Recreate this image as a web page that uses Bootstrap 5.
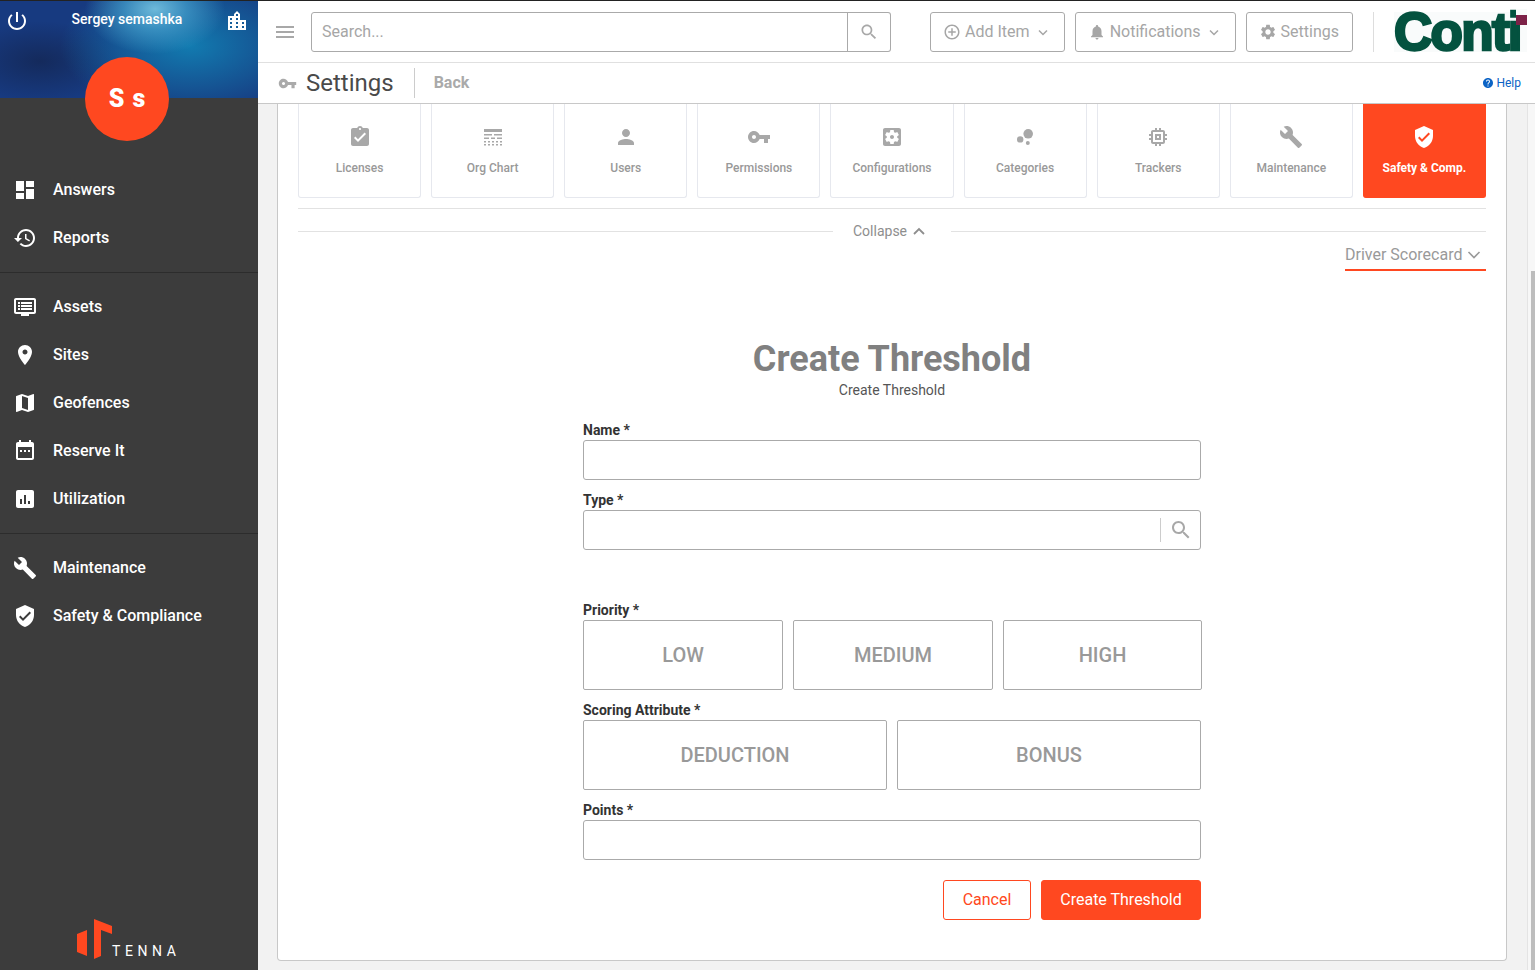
<!DOCTYPE html>
<html lang="en">
<head>
<meta charset="utf-8">
<title>Create Threshold</title>
<link href="https://cdn.jsdelivr.net/npm/bootstrap@5.3.3/dist/css/bootstrap.min.css" rel="stylesheet">
<style>
  html, body { height: 970px; overflow: hidden; }
  body { font-family: Roboto, "Liberation Sans", sans-serif; font-size: 14px; background: #f2f2f2; border-top: 1px solid #222; }
  .ico { width: 24px; height: 24px; fill: currentColor; flex: none; }
  .gap-10 { gap: 10px; }

  /* sidebar */
  .side { width: 258px; height: 969px; background: #3c3c3c; color: #fff; flex: none; }
  .hero { height: 97px; padding: 8px 9px 0 5px; background:
      radial-gradient(ellipse 70px 45px at 155px 8px, #6db9da 0%, rgba(70,160,205,.7) 45%, rgba(20,110,170,0) 100%),
      radial-gradient(ellipse 130px 70px at 190px 45px, #127bb0 0%, rgba(16,100,160,0) 100%),
      radial-gradient(ellipse 80px 40px at 40px 60px, #142a5c 0%, rgba(15,35,80,0) 100%),
      #173a80; }
  .hero-name { font-size: 14px; font-weight: 500; line-height: 18px; margin-top: 1px; }
  .avatar { width: 84px; height: 84px; left: 85px; top: 56px; padding-left: 1px; background: #ff4820; font-size: 25px; font-weight: 900; letter-spacing: 1px; }
  .side-nav { padding-top: 68px; }
  .side-item { height: 48px; padding-left: 13px; font-size: 16px; font-weight: 500; color: #fff; gap: 16px; }
  .side-rule { border-top: 1px solid #2c2c2c; margin: 10px 0; }
  .tenna { padding: 0 0 10px 76px; }
  .tenna-word { font-size: 14px; letter-spacing: 4.6px; line-height: 14px; margin-left: -1px; padding-bottom: 2px; }

  /* top bars */
  .topbar { height: 62px; background: #fff; border-bottom: 1px solid #e0e0e0; padding: 0 8px 0 15px; }
  .burger { color: #a8a8a8; }
  .search-box { width: 580px; height: 40px; margin-left: 14px; }
  .search-box .form-control { border-color: #aaa; border-radius: 3px 0 0 3px; font-size: 16px; padding-left: 10px; }
  .search-box .form-control::placeholder { color: #a6a6a6; }
  .search-btn { width: 44px; background: #fff; border: 1px solid #aaa; border-left-color: #888; border-radius: 0 3px 3px 0; color: #a8a8a8; }
  .search-btn .ico { width: 20px; height: 20px; }
  .top-btn { height: 40px; border: 1px solid #aaa; border-radius: 3px; background: #fff; color: #a6a6a6; font-size: 16px; padding: 0 13px 0 12px; gap: 4px; margin-left: 10px; }
  .top-btn .ico { width: 18px; height: 18px; }
  .top-chev { width: 16px; height: 16px; margin-left: 1px; fill: none; stroke: currentColor; stroke-width: 1.5; }
  .top-rule { width: 1px; height: 40px; background: #ddd; margin: 0 20px; }
  .conti { width: 133px; height: 40px; background: #f9fbfb; }
  .conti-word { font-family: "Liberation Sans", sans-serif; font-size: 53px; font-weight: 700; line-height: 40px; letter-spacing: -1.7px; color: #04523f; -webkit-text-stroke: 2.6px #04523f; }
  .conti-dot { width: 11px; height: 10px; background: #7d2248; right: 0; top: 3px; box-shadow: 0 -6px 0 #f9fbfb; }
  .subbar { height: 41px; background: #fff; border-bottom: 1px solid #c8c8c8; padding: 0 14px 0 20px; }
  .subbar .key { width: 19px; height: 19px; color: #aaa; }
  .sub-title { font-size: 24px; color: #4a4a4a; margin-left: 9px; line-height: 30px; }
  .sub-rule { width: 1px; height: 30px; background: #ccc; margin: 0 19px 0 20px; }
  .sub-back { font-size: 16px; font-weight: 700; color: #aaa; }
  .help { font-size: 12px; color: #0b63c5; gap: 2px; }
  .help .ico { width: 12px; height: 12px; }

  /* content */
  .stage { padding: 0 20px 0 19px; }
  .sheet { background: #fff; border: 1px solid #c8c8c8; border-top: 0; border-radius: 0 0 4px 4px; height: 857px; padding: 0 20px; }
  .tile { flex: 1 1 0; height: 94px; border: 1px solid #e6e8ee; border-top: 0; border-radius: 0 0 3px 3px; color: #a8a8a8; font-size: 12px; font-weight: 500; padding-top: 21px; }
  .tile .ico { margin-bottom: 10px; }
  .tile span { color: #999; line-height: 18px; }
  .tile-on { background: #ff4820; border-color: #ff4820; color: #fff; font-weight: 700; }
  .tile-on span { color: #fff; }
  .tile-rule { border-top: 1px solid #e2e2e2; margin-top: 10px; }
  .collapse-row { margin-top: 13px; height: 18px; color: #8e8e8e; }
  .collapse-line { flex: 1 1 0; border-top: 1px solid #e2e2e2; }
  .collapse-txt { width: 118px; padding-left: 20px; white-space: nowrap; gap: 5px; }
  .collapse-txt svg { width: 14px; height: 14px; fill: none; stroke: currentColor; stroke-width: 1.8; }
  .scorecard { width: 141px; margin-top: 1px; height: 30px; border-bottom: 2px solid #ff4820; font-size: 16px; color: #999; }
  .scorecard svg { width: 16px; height: 16px; margin-right: 4px; fill: none; stroke: currentColor; stroke-width: 1.6; }
  .form-title { font-size: 36px; font-weight: 700; color: #808080; line-height: 42px; margin-top: 67px; }
  .form-sub { color: #555; line-height: 20px; }
  .form-box { width: 618px; margin: 10px auto 0; }
  .fld-label { font-weight: 700; color: #333; line-height: 20px; margin-top: 10px; height: 20px; }
  .fld-label-far { margin-top: 50px; }
  .fld { height: 40px; border: 1px solid #aaa; border-radius: 3px; }
  .fld.form-control { border-color: #aaa; border-radius: 3px; }
  .fld-search { color: #a8a8a8; padding-right: 7px; }
  .fld-search i { width: 1px; height: 24px; background: #ccc; margin-right: 8px; }
  .pick { flex: 1 1 0; height: 70px; border: 1px solid #aaa; border-radius: 2px; background: #fff; color: #999; font-size: 20px; font-weight: 500; }
  .pick-wide { margin-right: -1px; }
  .pick-wide .pick:not(:last-child) { flex: 0 0 200px; }
  .form-actions { margin-top: 20px; }
  .act { height: 40px; font-size: 16px; border: 1px solid #ff4820; border-radius: 3px; }
  .act-ghost { width: 88px; background: #fff; color: #ff4820; }
  .act-main { width: 160px; background: #ff4820; color: #fff; }
  .scroll-strip { width: 8px; height: 866px; background: #f7f7f7; border-left: 1px solid #e4e4e4; padding-top: 167px; flex: none; }
  .scroll-thumb { height: 699px; width: 4px; margin-left: 3px; background: #bdbdbd; }
</style>
</head>
<body class="d-flex">

<svg class="d-none">
  <symbol id="i-dash" viewBox="0 0 24 24"><path d="M3 13h8V3H3v10zm0 8h8v-6H3v6zm10 0h8V11h-8v10zm0-18v6h8V3h-8z"/></symbol>
  <symbol id="i-hist" viewBox="0 0 24 24"><path d="M13 3c-4.97 0-9 4.03-9 9H1l3.89 3.89.07.14L9 12H6c0-3.87 3.13-7 7-7s7 3.13 7 7-3.13 7-7 7c-1.93 0-3.68-.79-4.94-2.06l-1.42 1.42C8.27 19.99 10.51 21 13 21c4.97 0 9-4.03 9-9s-4.03-9-9-9zm-1 5v5l4.28 2.54.72-1.21-3.5-2.08V8H12z"/></symbol>
  <symbol id="i-asset" viewBox="0 0 24 24"><path d="M21 3H3c-1.1 0-2 .9-2 2v12c0 1.1.9 2 2 2h5v2h8v-2h5c1.1 0 1.99-.9 1.99-2L23 5c0-1.1-.9-2-2-2zm0 14H3V5h18v12z"/><path d="M5 7h2v2H5zM8 7h11v2H8zM5 10h2v2H5zM8 10h11v2H8zM5 13h2v2H5zM8 13h11v2H8z"/></symbol>
  <symbol id="i-place" viewBox="0 0 24 24"><path d="M12 2C8.13 2 5 5.13 5 9c0 5.25 7 13 7 13s7-7.75 7-13c0-3.87-3.13-7-7-7zm0 9.5c-1.38 0-2.5-1.12-2.5-2.5s1.12-2.5 2.5-2.5 2.5 1.12 2.5 2.5-1.12 2.5-2.5 2.5z"/></symbol>
  <symbol id="i-map" viewBox="0 0 24 24"><path d="M20.5 3l-.16.03L15 5.1 9 3 3.36 4.9c-.21.07-.36.25-.36.48V20.5c0 .28.22.5.5.5l.16-.03L9 18.9l6 2.1 5.64-1.9c.21-.07.36-.25.36-.48V3.5c0-.28-.22-.5-.5-.5zM15 19l-6-2.11V5l6 2.11V19z"/></symbol>
  <symbol id="i-cal" viewBox="0 0 24 24"><path d="M19 3h-1V1h-2v2H8V1H6v2H5c-1.11 0-2 .9-2 2v14c0 1.1.89 2 2 2h14c1.1 0 2-.9 2-2V5c0-1.1-.9-2-2-2zm0 16H5V8h14v11z"/><path d="M7 11h2v2H7zM11 11h2v2h-2zM15 11h2v2h-2z"/></symbol>
  <symbol id="i-bars" viewBox="0 0 24 24"><path d="M19 3H5c-1.1 0-2 .9-2 2v14c0 1.1.9 2 2 2h14c1.1 0 2-.9 2-2V5c0-1.1-.9-2-2-2zM9 17H7v-5h2v5zm4 0h-2V8h2v9zm4 0h-2v-3h2v3z"/></symbol>
  <symbol id="i-wrench" viewBox="0 0 24 24"><path d="M22.7 19l-9.1-9.1c.9-2.3.4-5-1.5-6.9-2-2-5-2.4-7.4-1.3L9 6 6 9 1.6 4.7C.4 7.1.9 10.1 2.9 12.1c1.9 1.9 4.6 2.4 6.9 1.5l9.1 9.1c.4.4 1 .4 1.4 0l2.3-2.3c.5-.4.5-1.1.1-1.4z"/></symbol>
  <symbol id="i-shield" viewBox="0 0 24 24"><path d="M12 1L3 5v6c0 5.55 3.84 10.74 9 12 5.16-1.26 9-6.45 9-12V5l-9-4zm-2 16l-4-4 1.41-1.41L10 14.17l6.59-6.59L18 9l-8 8z"/></symbol>
  <symbol id="i-power" viewBox="0 0 24 24"><path d="M13 3h-2v10h2V3zm4.83 2.17l-1.42 1.42C17.99 7.86 19 9.81 19 12c0 3.87-3.13 7-7 7s-7-3.13-7-7c0-2.19 1.01-4.14 2.58-5.42L6.17 5.17C4.23 6.82 3 9.26 3 12c0 4.97 4.03 9 9 9s9-4.03 9-9c0-2.74-1.23-5.18-3.17-6.83z"/></symbol>
  <symbol id="i-city" viewBox="0 0 24 24"><path d="M15 11V5l-3-3-3 3v2H3v14h18V11h-6zm-8 8H5v-2h2v2zm0-4H5v-2h2v2zm0-4H5V9h2v2zm6 8h-2v-2h2v2zm0-4h-2v-2h2v2zm0-4h-2V9h2v2zm0-4h-2V5h2v2zm6 12h-2v-2h2v2zm0-4h-2v-2h2v2z"/></symbol>
  <symbol id="i-key" viewBox="0 0 24 24"><path d="M12.65 10C11.83 7.67 9.61 6 7 6c-3.31 0-6 2.69-6 6s2.69 6 6 6c2.61 0 4.83-1.67 5.65-4H17v4h4v-4h2v-4H12.65zM7 14c-1.1 0-2-.9-2-2s.9-2 2-2 2 .9 2 2-.9 2-2 2z"/></symbol>
  <symbol id="i-search" viewBox="0 0 24 24"><path d="M15.5 14h-.79l-.28-.27C15.41 12.59 16 11.11 16 9.5 16 5.91 13.09 3 9.5 3S3 5.91 3 9.5 5.91 16 9.5 16c1.61 0 3.09-.59 4.23-1.57l.27.28v.79l5 4.99L20.49 19l-4.99-5zm-6 0C7.01 14 5 11.99 5 9.5S7.01 5 9.5 5 14 7.01 14 9.5 11.99 14 9.500 14z"/></symbol>
  <symbol id="i-add" viewBox="0 0 24 24"><path d="M13 7h-2v4H7v2h4v4h2v-4h4v-2h-4V7zm-1-5C6.48 2 2 6.48 2 12s4.48 10 10 10 10-4.48 10-10S17.52 2 12 2zm0 18c-4.41 0-8-3.59-8-8s3.59-8 8-8 8 3.59 8 8-3.59 8-8 8z"/></symbol>
  <symbol id="i-bell" viewBox="0 0 24 24"><path d="M12 22c1.1 0 2-.9 2-2h-4c0 1.1.89 2 2 2zm6-6v-5c0-3.07-1.64-5.64-4.5-6.32V4c0-.83-.67-1.5-1.5-1.5s-1.5.67-1.5 1.5v.68C7.63 5.36 6 7.92 6 11v5l-2 2v1h16v-1l-2-2z"/></symbol>
  <symbol id="i-gear" viewBox="0 0 24 24"><path d="M19.14 12.94c.04-.3.06-.61.06-.94 0-.32-.02-.64-.07-.94l2.03-1.58c.18-.14.23-.41.12-.61l-1.92-3.32c-.12-.22-.37-.29-.59-.22l-2.39.96c-.5-.38-1.03-.7-1.62-.94l-.36-2.54c-.04-.24-.24-.41-.48-.41h-3.84c-.24 0-.43.17-.47.41l-.36 2.54c-.59.24-1.13.57-1.62.94l-2.39-.96c-.22-.08-.47 0-.59.22L2.74 8.87c-.12.21-.08.47.12.61l2.03 1.58c-.05.3-.09.63-.09.94s.02.64.07.94l-2.03 1.58c-.18.14-.23.41-.12.61l1.92 3.32c.12.22.37.29.59.22l2.39-.96c.5.38 1.03.7 1.62.94l.36 2.54c.05.24.24.41.48.41h3.84c.24 0 .44-.17.47-.41l.36-2.54c.59-.24 1.13-.56 1.62-.94l2.39.96c.22.08.47 0 .59-.22l1.92-3.32c.12-.22.07-.47-.12-.61l-2.01-1.58zM12 15.6c-1.98 0-3.6-1.62-3.6-3.6s1.62-3.6 3.6-3.6 3.6 1.62 3.6 3.6-1.62 3.6-3.6 3.6z"/></symbol>
  <symbol id="i-clip" viewBox="0 0 24 24"><path d="M19 3h-4.18C14.4 1.84 13.3 1 12 1c-1.3 0-2.4.84-2.82 2H5c-1.1 0-2 .9-2 2v14c0 1.1.9 2 2 2h14c1.1 0 2-.9 2-2V5c0-1.1-.9-2-2-2zm-7 0c.55 0 1 .45 1 1s-.45 1-1 1-1-.45-1-1 .45-1 1-1zm-2 14l-4-4 1.41-1.41L10 14.17l6.59-6.59L18 9l-8 8z"/></symbol>
  <symbol id="i-org" viewBox="0 0 24 24"><path d="M3 4h18v3H3zM3 9h8v1.500H3zM13 9h8v1.500h-8zM3 12.500h5V14H3zM10 12.500h4V14h-4zM16 12.500h5V14h-5zM3 16h2v1.500H3zM7 16h2v1.500H7zM11 16h2v1.500h-2zM15 16h2v1.500h-2zM19 16h2v1.500h-2zM3 19h2v1.500H3zM7 19h2v1.500H7zM11 19h2v1.500h-2zM15 19h2v1.500h-2zM19 19h2v1.500h-2z"/></symbol>
  <symbol id="i-person" viewBox="0 0 24 24"><path d="M12 12c2.21 0 4-1.79 4-4s-1.79-4-4-4-4 1.79-4 4 1.79 4 4 4zm0 2c-2.67 0-8 1.34-8 4v2h16v-2c0-2.66-5.33-4-8-4z"/></symbol>
  <symbol id="i-cfg" viewBox="0 0 24 24"><path d="M12 10c-1.1 0-2 .9-2 2s.9 2 2 2 2-.9 2-2-.9-2-2-2zm7-7H5c-1.11 0-2 .9-2 2v14c0 1.1.89 2 2 2h14c1.11 0 2-.9 2-2V5c0-1.1-.89-2-2-2zm-1.750 9c0 .23-.02.46-.05.68l1.480 1.160c.13.11.17.3.08.45l-1.400 2.420c-.09.15-.27.21-.43.15l-1.740-.7c-.36.28-.76.51-1.180.69l-.26 1.850c-.03.17-.18.3-.35.3h-2.800c-.17 0-.32-.13-.35-.29l-.26-1.850c-.43-.18-.82-.41-1.180-.69l-1.740.7c-.16.06-.34 0-.43-.15l-1.400-2.420c-.09-.15-.05-.34.08-.45l1.480-1.160c-.03-.23-.05-.46-.05-.69 0-.23.02-.46.05-.68l-1.480-1.160c-.13-.11-.17-.3-.08-.45l1.400-2.420c.09-.15.27-.21.43-.15l1.740.7c.36-.28.76-.51 1.180-.69l.26-1.850c.03-.17.18-.3.35-.3h2.800c.17 0 .32.13.35.29l.26 1.850c.43.18.82.41 1.180.69l1.740-.7c.16-.06.34 0 .43.15l1.400 2.420c.09.15.05.34-.08.45l-1.480 1.160c.03.23.05.46.05.69z"/></symbol>
  <symbol id="i-bubble" viewBox="0 0 24 24"><circle cx="7.2" cy="14.4" r="3.2"/><circle cx="14.8" cy="18" r="2"/><circle cx="15.2" cy="8.8" r="4.8"/></symbol>
  <symbol id="i-chip" viewBox="0 0 24 24"><path d="M15 9H9v6h6V9zm-2 4h-2v-2h2v2zm8-2V9h-2V7c0-1.1-.9-2-2-2h-2V3h-2v2h-2V3H9v2H7c-1.1 0-2 .9-2 2v2H3v2h2v2H3v2h2v2c0 1.1.9 2 2 2h2v2h2v-2h2v2h2v-2h2c1.1 0 2-.9 2-2v-2h2v-2h-2v-2h2zm-4 6H7V7h10v10z"/></symbol>
  <symbol id="i-help" viewBox="0 0 24 24"><path d="M12 2C6.48 2 2 6.48 2 12s4.48 10 10 10 10-4.48 10-10S17.52 2 12 2zm1 17h-2v-2h2v2zm2.07-7.75l-.9.92C13.45 12.9 13 13.5 13 15h-2v-.5c0-1.1.45-2.1 1.17-2.83l1.24-1.26c.37-.36.59-.86.59-1.41 0-1.1-.9-2-2-2s-2 .9-2 2H8c0-2.21 1.79-4 4-4s4 1.79 4 4c0 .88-.36 1.68-.93 2.25z"/></symbol>
  <symbol id="i-burger" viewBox="0 0 24 24"><path d="M3 6h18v2H3zM3 11h18v2H3zM3 16h18v2H3z"/></symbol>
</svg>

<!-- left menu -->
<aside class="side d-flex flex-column">
  <div class="hero position-relative d-flex justify-content-between align-items-start">
    <svg class="ico"><use href="#i-power"/></svg>
    <div class="hero-name">Sergey semashka</div>
    <svg class="ico"><use href="#i-city"/></svg>
    <div class="avatar position-absolute rounded-circle d-flex align-items-center justify-content-center">S s</div>
  </div>
  <nav class="side-nav">
    <a class="side-item d-flex align-items-center text-decoration-none" href="#"><svg class="ico"><use href="#i-dash"/></svg>Answers</a>
    <a class="side-item d-flex align-items-center text-decoration-none" href="#"><svg class="ico"><use href="#i-hist"/></svg>Reports</a>
    <div class="side-rule"></div>
    <a class="side-item d-flex align-items-center text-decoration-none" href="#"><svg class="ico"><use href="#i-asset"/></svg>Assets</a>
    <a class="side-item d-flex align-items-center text-decoration-none" href="#"><svg class="ico"><use href="#i-place"/></svg>Sites</a>
    <a class="side-item d-flex align-items-center text-decoration-none" href="#"><svg class="ico"><use href="#i-map"/></svg>Geofences</a>
    <a class="side-item d-flex align-items-center text-decoration-none" href="#"><svg class="ico"><use href="#i-cal"/></svg>Reserve It</a>
    <a class="side-item d-flex align-items-center text-decoration-none" href="#"><svg class="ico"><use href="#i-bars"/></svg>Utilization</a>
    <div class="side-rule"></div>
    <a class="side-item d-flex align-items-center text-decoration-none" href="#"><svg class="ico"><use href="#i-wrench"/></svg>Maintenance</a>
    <a class="side-item d-flex align-items-center text-decoration-none" href="#"><svg class="ico"><use href="#i-shield"/></svg>Safety &amp; Compliance</a>
  </nav>
  <div class="tenna mt-auto d-flex align-items-end">
    <svg width="37" height="41" viewBox="0 0 37 41"><path fill="#ff4820" d="M11 11 1 15v18l10 4zM18 0l18 7v8l-11-4v26l-7 3z"/></svg>
    <span class="tenna-word">TENNA</span>
  </div>
</aside>

<main class="flex-grow-1 d-flex flex-column">
  <header class="topbar d-flex align-items-center">
    <svg class="ico burger"><use href="#i-burger"/></svg>
    <div class="search-box input-group">
      <input class="form-control" type="text" placeholder="Search...">
      <button class="search-btn d-flex align-items-center justify-content-center" type="button"><svg class="ico"><use href="#i-search"/></svg></button>
    </div>
    <div class="ms-auto"></div>
    <button class="top-btn d-flex align-items-center" type="button"><svg class="ico"><use href="#i-add"/></svg>Add Item<svg class="top-chev" viewBox="0 0 16 16"><path d="M4 6.500l4 4 4-4"/></svg></button>
    <button class="top-btn d-flex align-items-center" type="button"><svg class="ico"><use href="#i-bell"/></svg>Notifications<svg class="top-chev" viewBox="0 0 16 16"><path d="M4 6.500l4 4 4-4"/></svg></button>
    <button class="top-btn d-flex align-items-center" type="button"><svg class="ico"><use href="#i-gear"/></svg>Settings</button>
    <div class="top-rule"></div>
    <div class="conti position-relative">
      <span class="conti-word">Conti</span>
      <div class="conti-dot position-absolute"></div>
    </div>
  </header>

  <div class="subbar d-flex align-items-center">
    <svg class="ico key"><use href="#i-key"/></svg>
    <span class="sub-title">Settings</span>
    <div class="sub-rule"></div>
    <span class="sub-back">Back</span>
    <a class="help d-flex align-items-center ms-auto text-decoration-none" href="#"><svg class="ico"><use href="#i-help"/></svg>Help</a>
  </div>

  <div class="d-flex flex-grow-1">
    <div class="stage flex-grow-1">
      <section class="sheet d-flex flex-column">
        <div class="d-flex gap-10">
          <div class="tile d-flex flex-column align-items-center"><svg class="ico"><use href="#i-clip"/></svg><span>Licenses</span></div>
          <div class="tile d-flex flex-column align-items-center"><svg class="ico"><use href="#i-org"/></svg><span>Org Chart</span></div>
          <div class="tile d-flex flex-column align-items-center"><svg class="ico"><use href="#i-person"/></svg><span>Users</span></div>
          <div class="tile d-flex flex-column align-items-center"><svg class="ico"><use href="#i-key"/></svg><span>Permissions</span></div>
          <div class="tile d-flex flex-column align-items-center"><svg class="ico"><use href="#i-cfg"/></svg><span>Configurations</span></div>
          <div class="tile d-flex flex-column align-items-center"><svg class="ico"><use href="#i-bubble"/></svg><span>Categories</span></div>
          <div class="tile d-flex flex-column align-items-center"><svg class="ico"><use href="#i-chip"/></svg><span>Trackers</span></div>
          <div class="tile d-flex flex-column align-items-center"><svg class="ico"><use href="#i-wrench"/></svg><span>Maintenance</span></div>
          <div class="tile tile-on d-flex flex-column align-items-center"><svg class="ico"><use href="#i-shield"/></svg><span>Safety &amp; Comp.</span></div>
        </div>
        <div class="tile-rule"></div>
        <div class="collapse-row d-flex align-items-center">
          <div class="collapse-line"></div>
          <div class="collapse-txt d-flex align-items-center">Collapse<svg viewBox="0 0 14 14"><path d="M2 10l5-5 5 5"/></svg></div>
          <div class="collapse-line"></div>
        </div>
        <div class="scorecard d-flex align-items-center justify-content-between align-self-end">Driver Scorecard<svg viewBox="0 0 16 16"><path d="M2.500 5l5.500 5.500L13.500 5"/></svg></div>

        <h1 class="form-title text-center mb-0">Create Threshold</h1>
        <div class="form-sub text-center">Create Threshold</div>

        <form class="form-box">
          <div class="fld-label">Name *</div>
          <input class="fld form-control" type="text">
          <div class="fld-label">Type *</div>
          <div class="fld fld-search d-flex align-items-center justify-content-end">
            <i></i><svg class="ico"><use href="#i-search"/></svg>
          </div>
          <div class="fld-label fld-label-far">Priority *</div>
          <div class="d-flex gap-10 pick-wide">
            <button class="pick" type="button">LOW</button>
            <button class="pick" type="button">MEDIUM</button>
            <button class="pick" type="button">HIGH</button>
          </div>
          <div class="fld-label">Scoring Attribute *</div>
          <div class="d-flex gap-10">
            <button class="pick" type="button">DEDUCTION</button>
            <button class="pick" type="button">BONUS</button>
          </div>
          <div class="fld-label">Points *</div>
          <input class="fld form-control" type="text">
          <div class="form-actions d-flex justify-content-end gap-10">
            <button class="act act-ghost" type="button">Cancel</button>
            <button class="act act-main" type="button">Create Threshold</button>
          </div>
        </form>
      </section>
    </div>
    <div class="scroll-strip"><div class="scroll-thumb"></div></div>
  </div>
</main>

<script src="https://cdn.jsdelivr.net/npm/bootstrap@5.3.3/dist/js/bootstrap.bundle.min.js"></script>
</body>
</html>
